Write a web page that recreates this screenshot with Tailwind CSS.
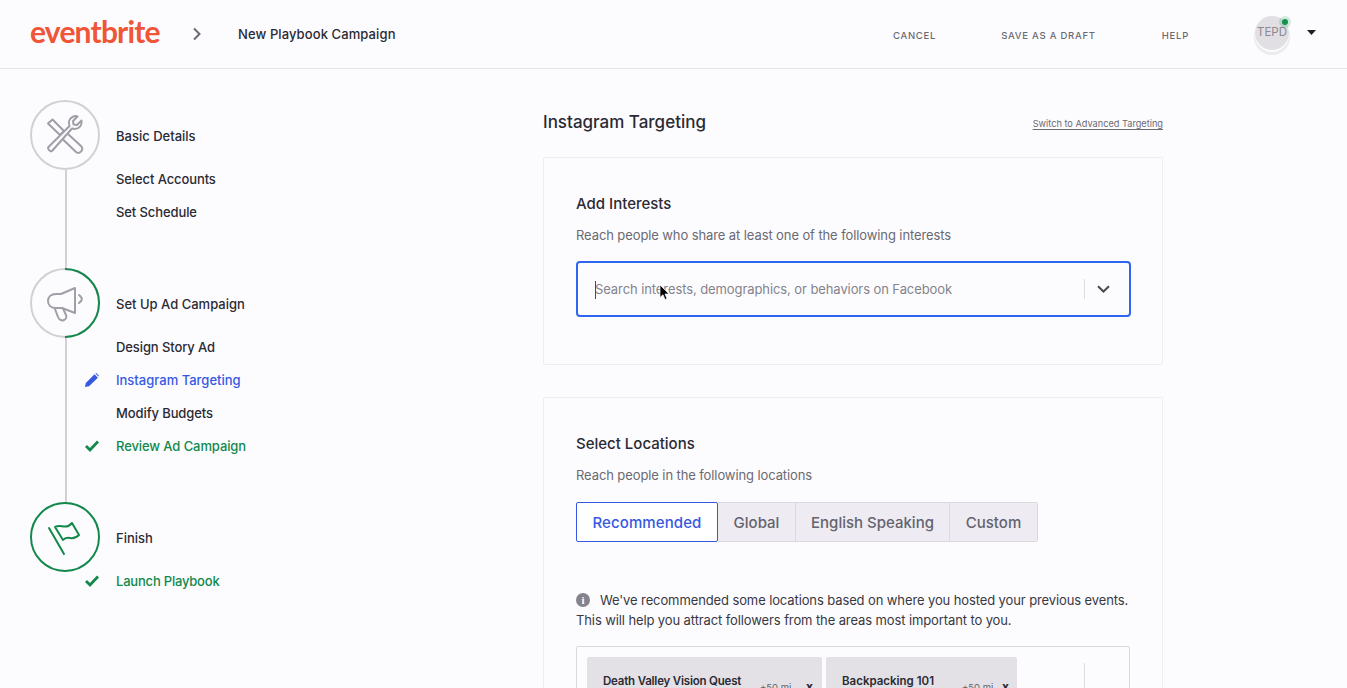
<!DOCTYPE html>
<html lang="en">
<head>
<meta charset="utf-8">
<title>New Playbook Campaign</title>
<script src="https://cdn.jsdelivr.net/npm/@tailwindcss/browser@4"></script>
</head>
<body class="m-0">
<div class="relative h-[688px] w-[1347px] overflow-hidden bg-[#fcfcff] font-['Inter','Liberation_Sans',sans-serif] text-[#2b2a33]">
  <header class="flex h-[69px] items-center border-b border-[#e5e3e7] pl-[30px]">
    <span class="w-[130px] font-['Lato',sans-serif] text-[30px] leading-none font-bold tracking-[-0.8px] text-[#f05537] -mt-[6px]">eventbrite</span>
    <svg class="ml-[32px] h-[14px] w-[10px]" viewBox="0 0 10 14" fill="none" stroke="#6b6a72" stroke-width="2"><path d="M2 1.500 7.500 7 2 12.500"/></svg>
    <span class="ml-[36px] mt-[1px] text-[13px] font-medium tracking-[0.1px]">New Playbook Campaign</span>
    <nav class="ml-auto flex items-center pr-[31px] text-[9.500px] font-medium tracking-[0.75px] text-[#6b6a72]">
      <span class="mt-[4px]">CANCEL</span>
      <span class="ml-[65px] mt-[4px]">SAVE AS A DRAFT</span>
      <span class="ml-[66px] mt-[4px]">HELP</span>
      <span class="relative ml-[66px] mr-[1px] flex h-[34px] w-[34px] -mt-[3px] items-center justify-center rounded-full bg-[#e1dfe3] text-[11.500px] font-normal tracking-normal text-[#8b8a92] shadow-[0_2px_0_0_#fcfcff,0_4px_0_1px_#eceaed]">TEPD
        <span class="absolute top-[3px] right-[1px] h-[6px] w-[6px] rounded-full bg-[#12934c] shadow-[0_0_0_3px_rgba(18,147,76,0.18)]"></span>
      </span>
      <svg class="ml-[17px] h-[5px] w-[9px] -mt-[4px]" viewBox="0 0 9 5" fill="#1f1e26"><path d="M0 0h9L4.500 5z"/></svg>
    </nav>
  </header>

  <main class="flex">
    <aside class="w-[543px] shrink-0 pt-[31px] pl-[30px] text-[13px] font-medium">
      <div class="flex h-[70px] items-center">
        <svg class="h-[70px] w-[70px] shrink-0" viewBox="0 0 70 70" fill="none" stroke-width="2">
          <circle cx="35" cy="35" r="34" stroke="#d2d0d6"/>
          <g stroke="#a09ea6" stroke-linejoin="round" stroke-linecap="round">
            <path d="M18 23.500 22.500 19.500 34 31 30 35z"/>
            <path d="M38.500 34.500 51 46c1.800 2 1.800 3.600 0 5.500-2 2-3.700 2-5.500 0L33.500 40"/>
            <path d="M18.500 47 39.500 26c-1.500-4 0-7.500 3-9 2-1 4-1 5-.5L43 21l.5 3.500 3.500.5 4.500-4.500c.5 2 0 4-1 5.500-2 2.500-5 3.500-8.500 2.500L22 51c-1.500 1.500-5-2.500-3.500-4z"/>
          </g>
        </svg>
        <span class="ml-[16px] mt-[3px]">Basic Details</span>
      </div>
      <div class="ml-[35px] flex flex-col gap-[15px] border-l-2 border-[#d2d0d6] pb-[47px] pl-[49px] tracking-[-0.1px]">
        <span class="h-[18px] leading-[18px]">Select Accounts</span>
        <span class="h-[18px] leading-[18px]">Set Schedule</span>
      </div>

      <div class="flex h-[70px] items-center">
        <svg class="h-[70px] w-[70px] shrink-0" viewBox="0 0 70 70" fill="none" stroke-width="2">
          <circle cx="35" cy="35" r="34" stroke="#d2d0d6"/>
          <path d="M35 1a34 34 0 0 1 0 68" stroke="#12894a"/>
          <g stroke="#a09ea6" stroke-linejoin="round" stroke-linecap="round">
            <path d="M45 20v25L32 40H26c-5 0-8-3-8-7 0-4 3-7 8-7h5z"/>
            <path d="M25 41l3 8c1 3 4 4 6 3s3-3 2-5l-3-6.500"/>
            <path d="M49 27c2 1.500 3 3 2.800 4.500-.2 1.200-1 2-2.800 3.500"/>
          </g>
        </svg>
        <span class="ml-[16px] mt-[3px]">Set Up Ad Campaign</span>
      </div>
      <div class="ml-[35px] flex flex-col gap-[15px] border-l-2 border-[#d2d0d6] pb-[47px] pl-[49px] tracking-[-0.1px]">
        <span class="h-[18px] leading-[18px]">Design Story Ad</span>
        <span class="flex h-[18px] items-center leading-[18px] tracking-normal text-[#3659e3]">
          <svg class="-ml-[31px] mr-[17px] h-[14px] w-[14px] shrink-0" viewBox="0 0 14 14" fill="#3659e3"><path d="M0 14 .8 10 9.500 1.300l3.400 3.400L4 13.300z"/><path d="M10.500.5 11.300 0l2.700 2.700-.7.800z"/></svg>
          Instagram Targeting
        </span>
        <span class="h-[18px] leading-[18px]">Modify Budgets</span>
        <span class="flex h-[18px] items-center leading-[18px] text-[#12894a]">
          <svg class="-ml-[31px] mr-[17px] h-[14px] w-[14px] shrink-0" viewBox="0 0 14 14" fill="none" stroke="#12894a" stroke-width="2.800"><path d="M1 7 5 11 13 2.500"/></svg>
          Review Ad Campaign
        </span>
      </div>

      <div class="flex h-[70px] items-center">
        <svg class="h-[70px] w-[70px] shrink-0" viewBox="0 0 70 70" fill="none" stroke-width="2">
          <circle cx="35" cy="35" r="34" stroke="#12894a"/>
          <g stroke="#12894a" stroke-linejoin="round" stroke-linecap="round">
            <path d="M19 26 34 52"/>
            <path d="M25 25c3-1.500 6-1 9-.5 3 .5 5 0 8-3.500l7 12c-3 3-6 3.500-9 3-3-.5-5-.5-7 2z"/>
          </g>
        </svg>
        <span class="ml-[16px] mt-[3px]">Finish</span>
      </div>
      <div class="ml-[35px] flex flex-col pl-[51px] tracking-[-0.2px]">
        <span class="flex h-[18px] items-center leading-[18px] text-[#12894a]">
          <svg class="-ml-[31px] mr-[17px] h-[14px] w-[14px] shrink-0" viewBox="0 0 14 14" fill="none" stroke="#12894a" stroke-width="2.800"><path d="M1 7 5 11 13 2.500"/></svg>
          Launch Playbook
        </span>
      </div>
    </aside>

    <section class="w-[620px] shrink-0">
      <div class="flex h-[88px] items-start justify-between pt-[41px]">
        <h1 class="text-[17px] leading-6 font-medium">Instagram Targeting</h1>
        <a class="mt-[7px] text-[9.200px] leading-[14px] text-[#6b6a72] underline underline-offset-2">Switch to Advanced Targeting</a>
      </div>

      <div class="h-[208px] rounded-[2px] border border-[#eeedf2] px-[32px] pt-[36px]">
        <h2 class="text-[15px] leading-5 font-medium">Add Interests</h2>
        <p class="mt-[11px] text-[13px] leading-5 tracking-[-0.1px] text-[#6b6a72]">Reach people who share at least one of the following interests</p>
        <div class="mt-[16px] flex h-[56px] w-[555px] items-center rounded-[4px] border-2 border-[#2f66f0] pr-[19px] pl-[17px]">
          <span class="mt-[1px] h-[18px] w-px bg-[#4b4a52]"></span>
          <span class="-ml-[1px] mt-[2px] flex-1 text-[13px] tracking-[-0.09px] text-[#84838b]">Search interests, demographics, or behaviors on Facebook</span>
          <span class="mr-[12px] h-[20px] w-px bg-[#dddce0]"></span>
          <svg class="h-[8px] w-[13px]" viewBox="0 0 13 8" fill="none" stroke="#4b4a52" stroke-width="2"><path d="M1 1.200 6.500 6.500 12 1.200"/></svg>
        </div>
      </div>

      <div class="mt-[32px] h-[400px] rounded-[2px] border border-[#eeedf2] px-[32px] pt-[36px]">
        <h2 class="text-[15px] leading-5 font-medium">Select Locations</h2>
        <p class="mt-[11px] text-[13px] leading-5 tracking-[-0.1px] text-[#6b6a72]">Reach people in the following locations</p>
        <div class="mt-[17px] flex h-[40px] text-[15px] font-medium text-[#64636e]">
          <span class="z-10 flex w-[142px] items-center justify-center rounded-[2px] border border-[#3659e3] bg-white pt-[2px] tracking-[0.1px] text-[#3659e3]">Recommended</span>
          <span class="flex w-[78px] items-center justify-center border-y border-r border-[#dbd9df] bg-[#eeecf2] pt-[2px]">Global</span>
          <span class="flex w-[154px] items-center justify-center border-y border-r border-[#dbd9df] bg-[#eeecf2] pt-[2px]">English Speaking</span>
          <span class="flex w-[88px] items-center justify-center rounded-r-[2px] border-y border-r border-[#dbd9df] bg-[#eeecf2] pt-[2px]">Custom</span>
        </div>
        <p class="mt-[48px] whitespace-nowrap text-[13px] leading-[20px] tracking-[-0.11px] text-[#39383f]">
          <span class="mr-[10px] inline-flex h-[14px] w-[14px] -translate-y-[1px] items-center justify-center rounded-full bg-[#84838b] font-['Liberation_Serif',serif] text-[11px] font-bold text-white">i</span>We've recommended some locations based on where you hosted your previous events.<br>This will help you attract followers from the areas most important to you.
        </p>
        <div class="mt-[16px] flex h-[120px] w-[554px] items-start gap-[4px] rounded-[2px] border border-[#d9d8dd] p-[10px]">
          <div class="relative h-[60px] w-[235px] rounded-[2px] bg-[#e3e1e5] pt-[16px] pl-[16px] text-[11.500px] leading-4 font-semibold tracking-[-0.2px] text-[#2b2a33]">
            Death Valley Vision Quest
            <span class="absolute top-[23px] left-[173px] text-[9.500px] font-normal tracking-normal text-[#64636e]">+50 mi</span>
            <span class="absolute top-[22px] left-[219px] text-[12px] font-bold">x</span>
          </div>
          <div class="relative h-[60px] w-[191px] rounded-[2px] bg-[#e3e1e5] pt-[16px] pl-[16px] text-[11.500px] leading-4 font-semibold text-[#2b2a33]">
            Backpacking 101
            <span class="absolute top-[23px] left-[136px] text-[9.500px] font-normal text-[#64636e]">+50 mi</span>
            <span class="absolute top-[22px] left-[176px] text-[12px] font-bold">x</span>
          </div>
          <span class="mt-[6px] ml-[63px] h-[60px] w-px bg-[#dddce0]"></span>
        </div>
      </div>
    </section>
  </main>

  <svg class="absolute top-[284px] left-[659px] h-[17px] w-[11px]" viewBox="0 0 11 17" fill="#000" stroke="#fff" stroke-width="0.7"><path d="M1 1v12.500l3-2.800 2 4.800 2-.8-2-4.700h4z"/></svg>
</div>
</body>
</html>
